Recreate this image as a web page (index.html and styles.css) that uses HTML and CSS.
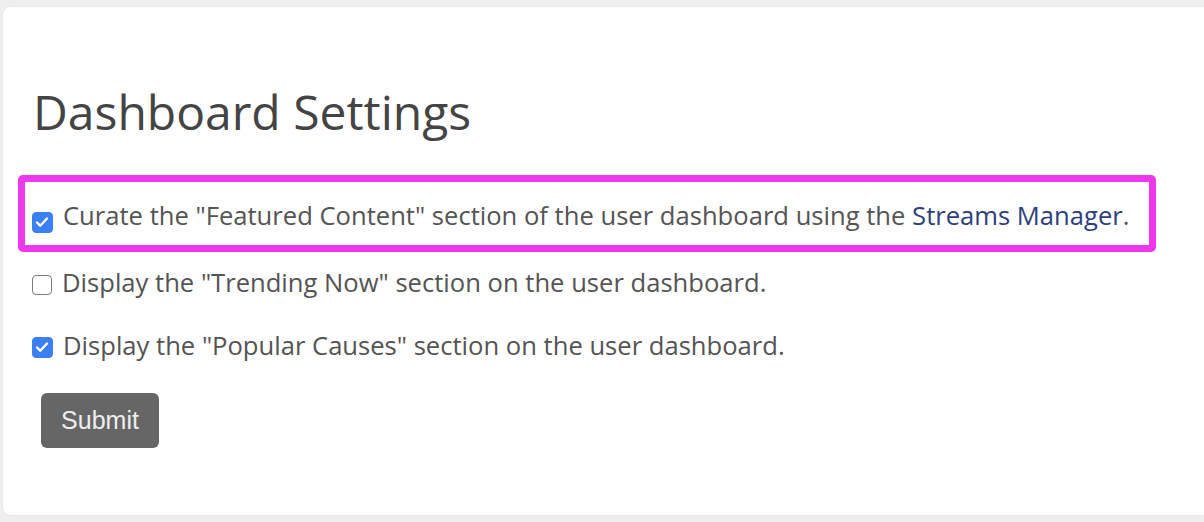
FILE: index.html
```html
<!DOCTYPE html>
<html lang="en">
<head>
<meta charset="utf-8">
<title>Dashboard Settings</title>
<link rel="stylesheet" href="styles.css">
</head>
<body>
<div class="page">
  <form class="card">
    <h1 class="title">Dashboard Settings</h1>
    <label class="row highlight">
      <span class="box checked"><svg viewBox="0 0 20 20" width="20" height="20"><path d="M5 10.5l3.2 3.2L15 6.5" fill="none" stroke="#fff" stroke-width="2.4" stroke-linecap="round" stroke-linejoin="round"/></svg></span>
      <span class="text">Curate the "Featured Content" section of the user dashboard using the <a class="link" href="#">Streams Manager</a>.</span>
    </label>
    <label class="row">
      <span class="box"></span>
      <span class="text">Display the "Trending Now" section on the user dashboard.</span>
    </label>
    <label class="row">
      <span class="box checked"><svg viewBox="0 0 20 20" width="20" height="20"><path d="M5 10.5l3.2 3.2L15 6.5" fill="none" stroke="#fff" stroke-width="2.4" stroke-linecap="round" stroke-linejoin="round"/></svg></span>
      <span class="text">Display the "Popular Causes" section on the user dashboard.</span>
    </label>
    <button class="submit" type="button">Submit</button>
  </form>
</div>
</body>
</html>
```

FILE: styles.css
```css
html, body {
  margin: 0;
  padding: 0;
  background: #efefef;
}
.page {
  padding: 7px 0 7px 3px;
  height: 522px;
  box-sizing: border-box;
}
.card {
  background: #fff;
  height: 100%;
  border-radius: 8px 0 0 8px;
  box-shadow: 0 0 2px rgba(0,0,0,0.08);
  padding: 0 0 0 29px;
  box-sizing: border-box;
  display: flex;
  flex-direction: column;
  align-items: flex-start;
  font-family: "Open Sans", sans-serif;
}
.title {
  margin: 75px 0 0 1px;
  font-size: 48px;
  line-height: 60px;
  font-weight: 400;
  color: #444;
}
.row {
  display: flex;
  align-items: center;
  height: 63px;
  gap: 10px;
  font-size: 25.6px;
  color: #545454;
  box-sizing: border-box;
}
.highlight {
  margin: 33px 0 -1px -14px;
  width: 1138px;
  height: 77px;
  border: 7px solid #ee38ee;
  border-radius: 5px;
  padding: 4px 0 0 7px;
}
.box {
  width: 20px;
  height: 20px;
  flex: none;
  box-sizing: border-box;
  border: 1.5px solid #7b7b7b;
  border-radius: 4px;
  background: #fff;
  display: flex;
  margin-top: 4px;
}
.highlight .box {
  margin-top: 14px;
}
.box.checked {
  background: #3b7ff5;
  border-color: #3b7ff5;
  width: 21px;
  height: 21px;
}
.box svg {
  margin: -1px;
}
.text {
  white-space: nowrap;
}
.link {
  color: #2d3f7c;
  text-decoration: none;
}
.submit {
  margin: 16px 0 0 9px;
  width: 118px;
  height: 55px;
  border: none;
  border-radius: 6px;
  background: #666;
  color: #eee;
  font-family: "Liberation Sans", Arial, sans-serif;
  font-size: 25px;
  padding: 0;
}
```
